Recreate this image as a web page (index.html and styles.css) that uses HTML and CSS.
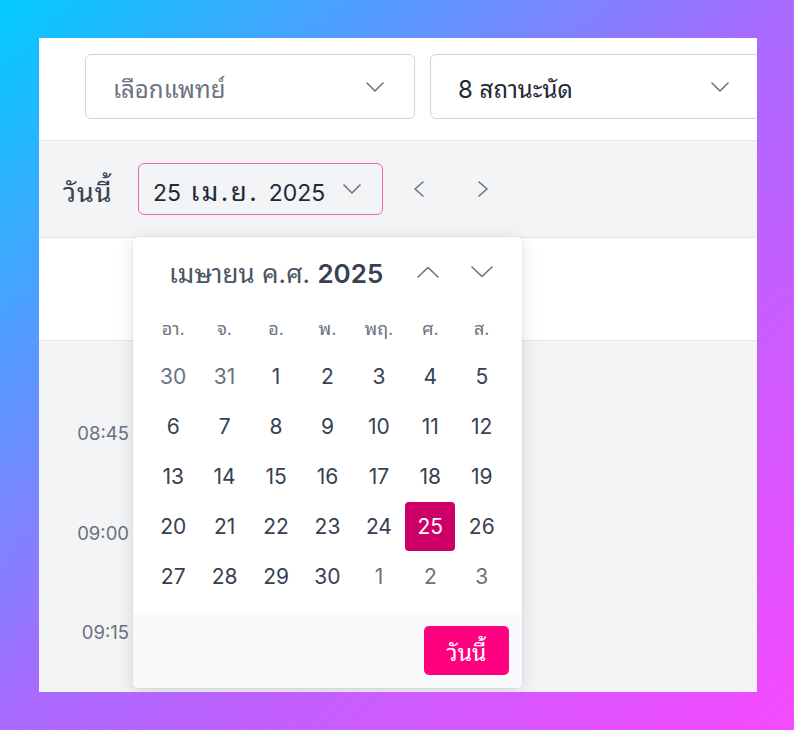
FILE: index.html
```html
<!DOCTYPE html>
<html lang="th">
<head>
<meta charset="utf-8">
<title>Calendar</title>
<link rel="stylesheet" href="styles.css">
</head>
<body>
<div class="panel">
  <div class="topbar">
    <div class="select">
      <span class="placeholder">เลือกแพทย์</span>
      <svg class="chev" width="18" height="10" viewBox="0 0 18 10"><polyline points="1,1 9,9 17,1"/></svg>
    </div>
    <div class="select">
      <span class="value">8 สถานะนัด</span>
      <svg class="chev" width="18" height="10" viewBox="0 0 18 10"><polyline points="1,1 9,9 17,1"/></svg>
    </div>
  </div>

  <div class="datebar">
    <span class="today-label">วันนี้</span>
    <div class="date-btn">
      <span class="date-text">25 <span class="th-month">เม.ย.</span> 2025</span>
      <svg class="chev" width="18" height="10" viewBox="0 0 18 10"><polyline points="1,1 9,9 17,1"/></svg>
    </div>
    <div class="nav-btn"><svg class="chev" width="12" height="16" viewBox="0 0 12 16"><polyline points="10,1 2,8 10,15"/></svg></div>
    <div class="nav-btn"><svg class="chev" width="12" height="16" viewBox="0 0 12 16"><polyline points="2,1 10,8 2,15"/></svg></div>
  </div>

  <div class="schedule">
    <div class="sched-head">
      <div class="time-head"></div>
      <div class="col-head"></div>
    </div>
    <div class="sched-body">
      <div class="times">
        <div class="time">08:45</div>
        <div class="time">09:00</div>
        <div class="time">09:15</div>
      </div>
      <div class="cols"></div>
    </div>
  </div>

  <div class="popover">
    <div class="pop-head">
      <div class="pop-title"><span class="month">เมษายน ค.ศ.</span> <span class="year">2025</span></div>
      <div class="pop-arrows">
        <svg class="chev" width="22" height="12" viewBox="0 0 22 12"><polyline points="1,11 11,1.5 21,11"/></svg>
        <svg class="chev" width="22" height="12" viewBox="0 0 22 12"><polyline points="1,1 11,10.5 21,1"/></svg>
      </div>
    </div>
    <div class="grid weekdays">
      <div>อา.</div><div>จ.</div><div>อ.</div><div>พ.</div><div>พฤ.</div><div>ศ.</div><div>ส.</div>
    </div>
    <div class="grid days">
      <div class="day out"><span>30</span></div><div class="day out"><span>31</span></div><div class="day"><span>1</span></div><div class="day"><span>2</span></div><div class="day"><span>3</span></div><div class="day"><span>4</span></div><div class="day"><span>5</span></div>
      <div class="day"><span>6</span></div><div class="day"><span>7</span></div><div class="day"><span>8</span></div><div class="day"><span>9</span></div><div class="day"><span>10</span></div><div class="day"><span>11</span></div><div class="day"><span>12</span></div>
      <div class="day"><span>13</span></div><div class="day"><span>14</span></div><div class="day"><span>15</span></div><div class="day"><span>16</span></div><div class="day"><span>17</span></div><div class="day"><span>18</span></div><div class="day"><span>19</span></div>
      <div class="day"><span>20</span></div><div class="day"><span>21</span></div><div class="day"><span>22</span></div><div class="day"><span>23</span></div><div class="day"><span>24</span></div><div class="day sel"><span>25</span></div><div class="day"><span>26</span></div>
      <div class="day"><span>27</span></div><div class="day"><span>28</span></div><div class="day"><span>29</span></div><div class="day"><span>30</span></div><div class="day out"><span>1</span></div><div class="day out"><span>2</span></div><div class="day out"><span>3</span></div>
    </div>
    <div class="pop-foot">
      <div class="today-btn">วันนี้</div>
    </div>
  </div>
</div>
</body>
</html>
```

FILE: styles.css
```css
* { box-sizing: border-box; }

html, body {
  margin: 0;
  padding: 0;
}

body {
  width: 794px;
  height: 730px;
  overflow: hidden;
  background: linear-gradient(to bottom right, #00ccff 0%, #a96aff 50%, #f64aff 100%);
  font-family: "Inter", "Noto Sans Thai Looped", "Noto Sans Thai", "Noto Sans", sans-serif;
  color: #374151;
  padding: 38px 0 0 39px;
}

.panel {
  position: relative;
  width: 718px;
  height: 654px;
  background: #ffffff;
  overflow: hidden;
}

.chev {
  fill: none;
  stroke: #6b7280;
  stroke-width: 1.6;
  stroke-linecap: round;
  stroke-linejoin: round;
  flex: none;
}

/* top bar */
.topbar {
  height: 103px;
  padding: 16px 0 0 46px;
  display: flex;
  gap: 15px;
  border-bottom: 1px solid #e5e7eb;
}

.select {
  flex: none;
  width: 330px;
  height: 65px;
  border: 1px solid #d1d5db;
  border-radius: 6px;
  display: flex;
  align-items: center;
  justify-content: space-between;
  padding: 0 30px 0 27px;
  font-size: 24px;
}

.placeholder { color: #6b7280; }
.value { color: #1f2937; }

/* date bar */
.datebar {
  height: 97px;
  background: #f3f4f6;
  border-bottom: 1px solid #e5e7eb;
  display: flex;
  align-items: center;
  padding-left: 24px;
}

.today-label {
  font-size: 27px;
  letter-spacing: 1px;
  color: #374151;
  width: 75px;
}

.date-btn {
  width: 245px;
  height: 52px;
  border: 1.5px solid #f464aa;
  border-radius: 6px;
  display: flex;
  align-items: center;
  justify-content: space-between;
  padding: 0 21px 0 14px;
  font-size: 23px;
  color: #1f2937;
  background: #f3f4f6;
  white-space: nowrap;
}

.date-text { word-spacing: 3px; }

.th-month {
  font-size: 26px;
  letter-spacing: 2.5px;
}

.nav-btn {
  width: 64px;
  display: flex;
  justify-content: center;
}
.date-btn + .nav-btn { margin-left: 4px; }

/* schedule */
.sched-head {
  height: 103px;
  display: flex;
  border-bottom: 1px solid #e5e7eb;
}

.time-head { width: 93px; }
.col-head { flex: 1; }

.sched-body {
  height: 400px;
  background: #f3f4f6;
  display: flex;
}

.times {
  width: 93px;
  padding: 82px 3px 0 0;
  display: flex;
  flex-direction: column;
  align-items: flex-end;
  gap: 79.5px;
}

.time {
  height: 20px;
  line-height: 20px;
  font-size: 18.5px;
  color: #6b7280;
}

.cols { flex: 1; }

/* popover */
.popover {
  position: absolute;
  left: 94px;
  top: 199px;
  width: 389px;
  height: 451px;
  background: #ffffff;
  border-radius: 5px;
  box-shadow: 0 4px 18px rgba(17, 24, 39, 0.13), 0 0 0 1px rgba(17, 24, 39, 0.04);
  overflow: hidden;
  display: flex;
  flex-direction: column;
}

.pop-head {
  height: 66px;
  display: flex;
  align-items: center;
  justify-content: space-between;
  padding: 2px 29px 0 36px;
  white-space: nowrap;
}

.pop-title {
  font-size: 26px;
  color: #374151;
}
.pop-title .month { color: #4b5563; }
.pop-title .year { font-weight: 600; }

.pop-arrows {
  display: flex;
  gap: 32px;
  padding-top: 2px;
}

.grid {
  display: grid;
  grid-template-columns: repeat(7, 1fr);
  padding: 0 14.5px;
}

.weekdays {
  height: 48px;
  align-items: center;
  text-align: center;
  font-size: 18px;
  color: #6b7280;
}

.days {
  grid-auto-rows: 50px;
  margin-bottom: 11px;
}

.day {
  display: flex;
  align-items: center;
  justify-content: center;
  font-size: 21px;
  color: #374151;
}

.day span {
  width: 50px;
  height: 49px;
  display: flex;
  align-items: center;
  justify-content: center;
  border-radius: 4px;
}

.day.out { color: #6b7280; }

.day.sel span {
  background: #cc0066;
  color: #ffffff;
}

.pop-foot {
  flex: 1;
  background: #f9fafb;
  display: flex;
  justify-content: flex-end;
  align-items: flex-start;
  padding: 14px 13px 0 0;
}

.today-btn {
  width: 85px;
  height: 49px;
  background: #ff0080;
  border-radius: 5px;
  color: #ffffff;
  font-size: 23px;
  display: flex;
  align-items: center;
  justify-content: center;
}
```
